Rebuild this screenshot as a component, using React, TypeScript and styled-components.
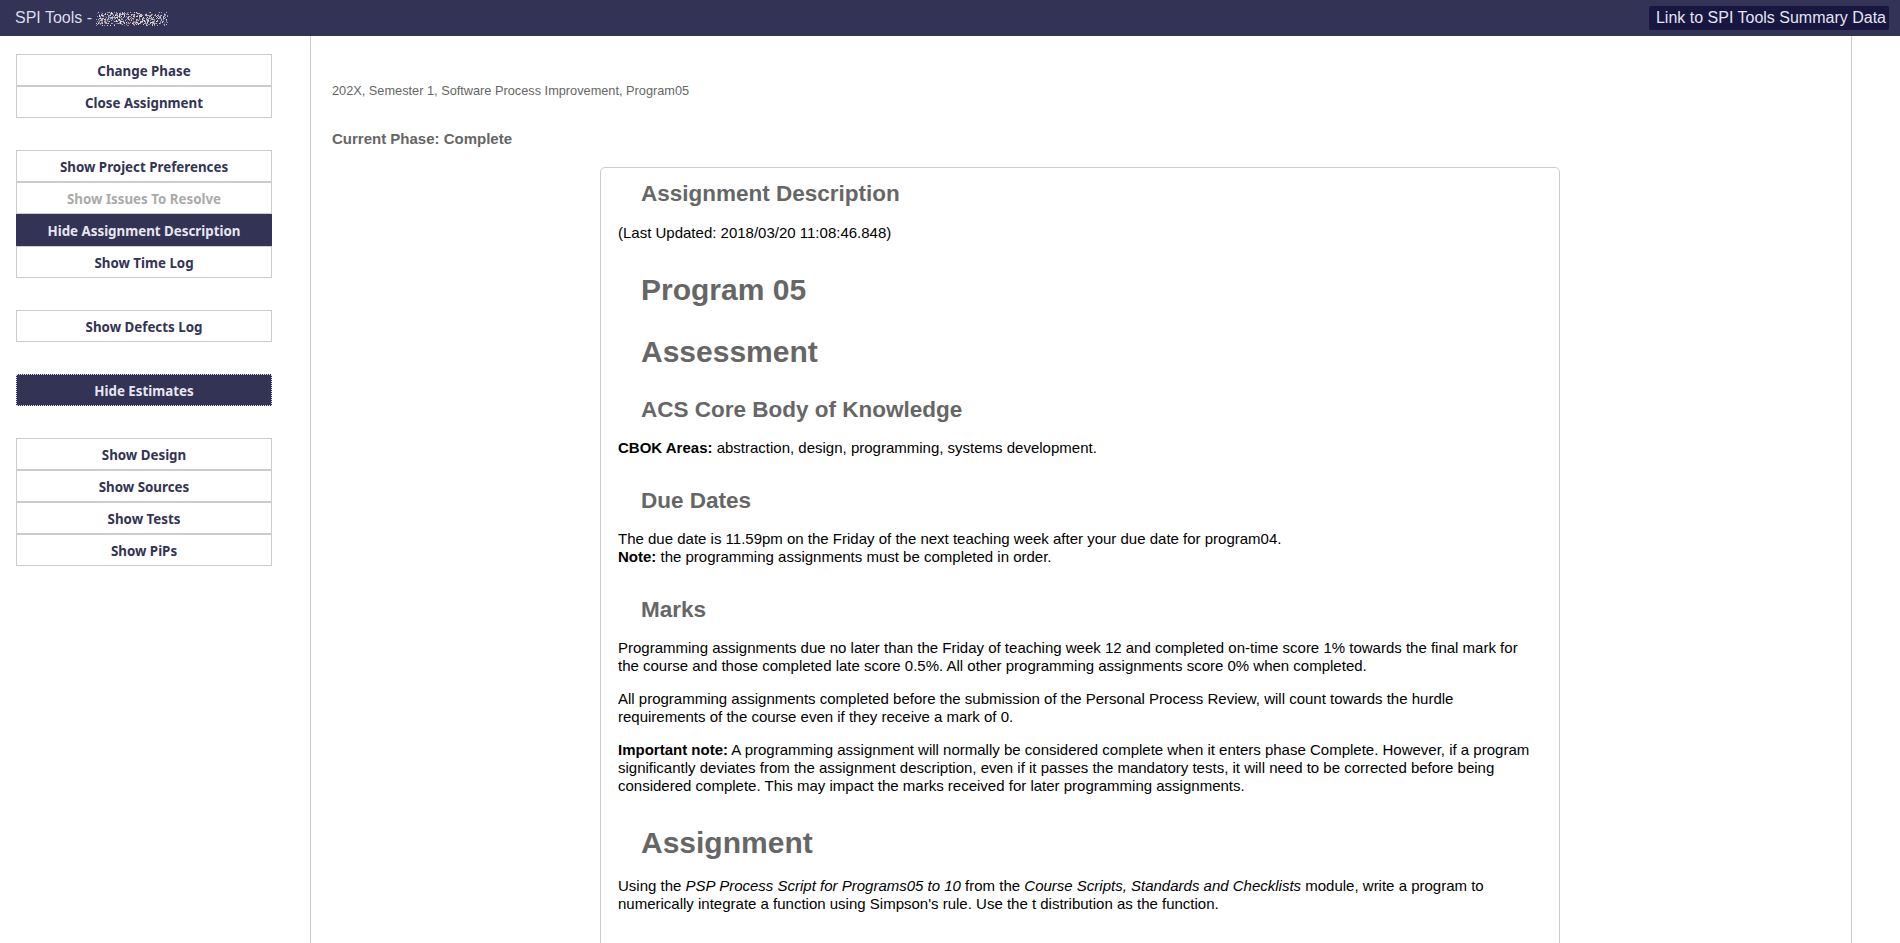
import React from "react";
import styled, { createGlobalStyle } from "styled-components";

const GlobalStyle = createGlobalStyle`
  html, body { margin: 0; padding: 0; background: #ffffff; }
  body { font-family: "Liberation Sans", Arial, sans-serif; color: #000; }
  * { box-sizing: border-box; }
`;

const Page = styled.div`
  display: flex;
  flex-direction: column;
  min-height: 100vh;
`;

const TopBar = styled.header`
  height: 36px;
  background: #333355;
  display: flex;
  align-items: center;
  justify-content: space-between;
  padding: 0 11px 0 15px;
  color: #dcdce8;
  font-size: 16px;
`;

const Brand = styled.div`
  display: flex;
  align-items: center;
  gap: 4px;
`;

const SummaryLink = styled.a`
  background: #17173f;
  color: #e4e4f2;
  font-size: 16px;
  line-height: 24px;
  padding: 0 3px 0 7px;
  border-radius: 2px;
  text-decoration: none;
`;

const Body = styled.div`
  flex: 1;
  display: grid;
  grid-template-columns: 310px 1542px 1fr;
`;

const Sidebar = styled.nav`
  padding: 18px 0 0 16px;
  display: flex;
  flex-direction: column;
  gap: 32px;
`;

const ButtonGroup = styled.div`
  display: flex;
  flex-direction: column;
  width: 256px;
`;

const SideButton = styled.button<{ $active?: boolean; $disabled?: boolean; $focused?: boolean }>`
  height: 32px;
  width: 256px;
  margin: 0;
  padding: 2px 0 0;
  font-family: "Noto Sans", "Open Sans", sans-serif;
  font-weight: 700;
  font-size: 13.33px;
  cursor: pointer;
  background: ${(p) => (p.$active ? "#333355" : "#ffffff")};
  color: ${(p) => (p.$active ? "#e6e6f0" : p.$disabled ? "#aaaaaa" : "#333355")};
  border: 1px ${(p) => (p.$focused ? "dotted" : "solid")}
    ${(p) => (p.$focused ? "#e0e0e8" : p.$active ? "#333355" : "#cccccc")};
`;

const Main = styled.main`
  border-left: 1px solid #cccccc;
  border-right: 1px solid #cccccc;
  padding: 47px 21px 0 21px;
`;

const Breadcrumb = styled.div`
  font-size: 12.75px;
  line-height: 15px;
  color: #666666;
`;

const Phase = styled.div`
  margin-top: 32px;
  font-size: 15px;
  line-height: 18px;
  font-weight: 700;
  color: #666666;
`;

const Card = styled.section`
  width: 960px;
  margin: 19px auto 0;
  border: 1px solid #cccccc;
  border-radius: 5px;
  padding: 12px 17px 40px 17px;
  transform: translateX(-1px);
`;

const CardTitle = styled.h3`
  margin: 0 0 17px;
  padding-left: 23px;
  font-size: 22.5px;
  line-height: 27px;
  font-weight: 700;
  color: #666666;
`;

const Para = styled.p`
  margin: 15px 0;
  font-size: 15px;
  line-height: 18px;
  color: #000;
`;

const Heading = styled.h2<{ $big?: boolean }>`
  margin: 26px 0 16.5px;
  padding-left: 23px;
  font-size: ${(p) => (p.$big ? "30px" : "22.5px")};
  line-height: ${(p) => (p.$big ? "36px" : "27px")};
  font-weight: 700;
  color: #666666;
  ${Para} + & {
    margin-top: 29.5px;
  }
`;

function BlurredName() {
  const cells: React.ReactNode[] = [];
  let seed = 7;
  const rnd = () => {
    seed = (seed * 9301 + 49297) % 233280;
    return seed / 233280;
  };
  const palette = ["#ffffff", "#e8e8f0", "#c8c8d8", "#9aa6c8", "#f0c8a0", "#d89070", "#a8b8e0", "#6a6a90"];
  for (let y = 0; y < 14; y++) {
    for (let x = 0; x < 72; x++) {
      const edge = Math.min(x, 71 - x, y, 13 - y);
      const p = rnd();
      if (p < (edge < 2 ? 0.25 : 0.5)) {
        const c = palette[Math.floor(rnd() * palette.length)];
        cells.push(<rect key={`${x}-${y}`} x={x} y={y} width={1} height={1} fill={c} opacity={0.85} />);
      }
    }
  }
  return (
    <svg width="72" height="14" viewBox="0 0 72 14" style={{ marginTop: 2 }} aria-hidden>
      {cells}
    </svg>
  );
}

export default function App() {
  return (
    <>
      <GlobalStyle />
      <Page>
        <TopBar>
          <Brand>
            <span>SPI Tools -</span>
            <BlurredName />
          </Brand>
          <SummaryLink href="#">Link to SPI Tools Summary Data</SummaryLink>
        </TopBar>
        <Body>
          <Sidebar>
            <ButtonGroup>
              <SideButton>Change Phase</SideButton>
              <SideButton>Close Assignment</SideButton>
            </ButtonGroup>
            <ButtonGroup>
              <SideButton>Show Project Preferences</SideButton>
              <SideButton $disabled>Show Issues To Resolve</SideButton>
              <SideButton $active>Hide Assignment Description</SideButton>
              <SideButton>Show Time Log</SideButton>
            </ButtonGroup>
            <ButtonGroup>
              <SideButton>Show Defects Log</SideButton>
            </ButtonGroup>
            <ButtonGroup>
              <SideButton $active $focused>Hide Estimates</SideButton>
            </ButtonGroup>
            <ButtonGroup>
              <SideButton>Show Design</SideButton>
              <SideButton>Show Sources</SideButton>
              <SideButton>Show Tests</SideButton>
              <SideButton>Show PiPs</SideButton>
            </ButtonGroup>
          </Sidebar>
          <Main>
            <Breadcrumb>202X, Semester 1, Software Process Improvement, Program05</Breadcrumb>
            <Phase>Current Phase: Complete</Phase>
            <Card>
              <CardTitle>Assignment Description</CardTitle>
              <Para>(Last Updated: 2018/03/20 11:08:46.848)</Para>
              <Heading $big>Program 05</Heading>
              <Heading $big>Assessment</Heading>
              <Heading>ACS Core Body of Knowledge</Heading>
              <Para>
                <b>CBOK Areas:</b> abstraction, design, programming, systems development.
              </Para>
              <Heading>Due Dates</Heading>
              <Para>
                The due date is 11.59pm on the Friday of the next teaching week after your due date for program04.
                <br />
                <b>Note:</b> the programming assignments must be completed in order.
              </Para>
              <Heading>Marks</Heading>
              <Para>
                Programming assignments due no later than the Friday of teaching week 12 and completed on-time score 1%
                towards the final mark for the course and those completed late score 0.5%. All other programming
                assignments score 0% when completed.
              </Para>
              <Para>
                All programming assignments completed before the submission of the Personal Process Review, will count
                towards the hurdle requirements of the course even if they receive a mark of 0.
              </Para>
              <Para>
                <b>Important note:</b> A programming assignment will normally be considered complete when it enters
                phase Complete. However, if a program significantly deviates from the assignment description, even if it
                passes the mandatory tests, it will need to be corrected before being considered complete. This may
                impact the marks received for later programming assignments.
              </Para>
              <Heading $big>Assignment</Heading>
              <Para>
                Using the <i>PSP Process Script for Programs05 to 10</i> from the{" "}
                <i>Course Scripts, Standards and Checklists</i> module, write a program to numerically integrate a
                function using Simpson's rule. Use the t distribution as the function.
              </Para>
            </Card>
          </Main>
          <div />
        </Body>
      </Page>
    </>
  );
}
